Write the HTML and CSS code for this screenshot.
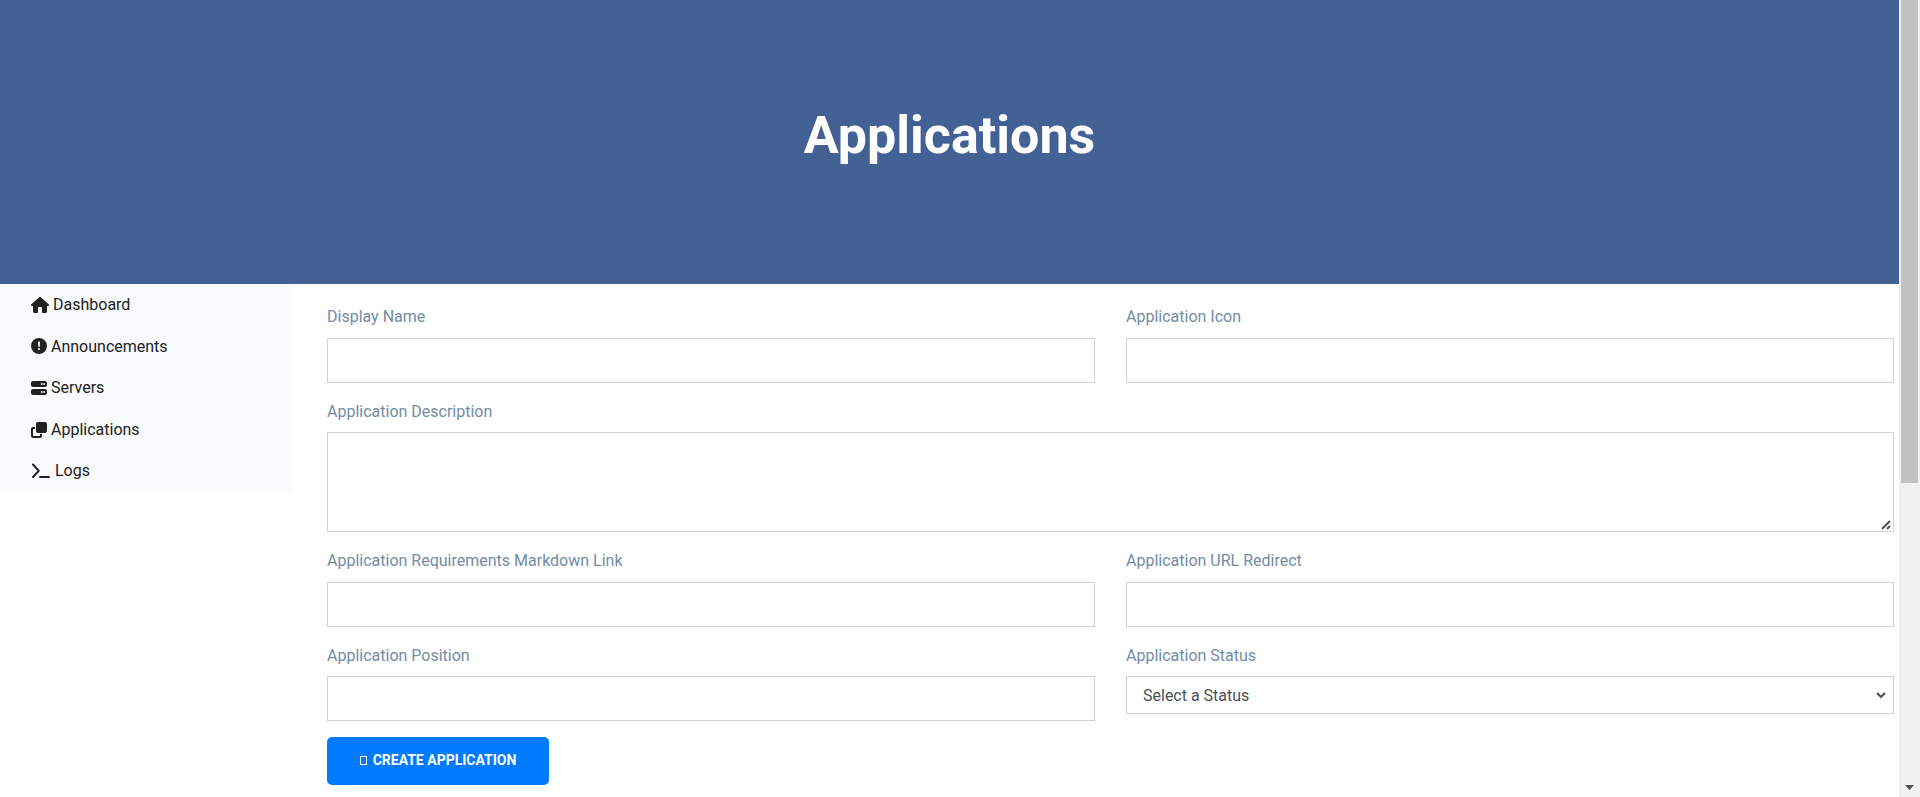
FILE: index.html
```
<!DOCTYPE html>
<html lang="en">
<head>
<meta charset="utf-8">
<title>Applications</title>
<link rel="stylesheet" href="styles.css">
</head>
<body>
<div class="page">
  <header class="banner"><h1 class="banner-title">Applications</h1></header>
  <div class="content">
    <nav class="sidebar">
      <a class="nav-link" href="#"><svg class="icon icon-wide" viewBox="0 0 576 512"><path d="M576 256c0 18-15 32-32 32h-32l1 160v16c0 26-22 48-48 48h-81c-18 0-32-14-32-32V352c0-18-14-32-32-32h-64c-18 0-32 14-32 32v128c0 18-14 32-32 32h-80c-26 0-48-22-48-48V288H32c-18 0-32-14-32-32 0-9 3-17 10-24L266 8c7-7 15-8 22-8s15 2 21 7l255 225c8 7 12 15 12 24z"/></svg>Dashboard</a>
      <a class="nav-link" href="#"><svg class="icon" viewBox="0 0 512 512"><path fill-rule="evenodd" d="M256 512a256 256 0 1 0 0-512 256 256 0 1 0 0 512zm0-400c18 0 32 14 32 28l-6 124c0 13-12 24-26 24s-26-11-26-24l-6-124c0-14 14-28 32-28zm-34 240a34 34 0 1 1 68 0 34 34 0 1 1-68 0z"/></svg>Announcements</a>
      <a class="nav-link" href="#"><svg class="icon" viewBox="0 0 512 512"><path fill-rule="evenodd" d="M64 32C29 32 0 61 0 96v64c0 35 29 64 64 64h384c35 0 64-29 64-64V96c0-35-29-64-64-64H64zm280 66a30 30 0 1 1 0 60 30 30 0 1 1 0-60zm48 30a30 30 0 1 1 60 0 30 30 0 1 1-60 0zM64 288c-35 0-64 29-64 64v64c0 35 29 64 64 64h384c35 0 64-29 64-64v-64c0-35-29-64-64-64H64zm280 66a30 30 0 1 1 0 60 30 30 0 1 1 0-60zm48 30a30 30 0 1 1 60 0 30 30 0 1 1-60 0z"/></svg>Servers</a>
      <a class="nav-link" href="#"><svg class="icon" viewBox="0 0 512 512"><path d="M224 0c-35 0-64 29-64 64v224c0 35 29 64 64 64h224c35 0 64-29 64-64V64c0-35-29-64-64-64H224zM64 160c-35 0-64 29-64 64v224c0 35 29 64 64 64h224c35 0 64-29 64-64v-64h-64v64H64V224h64v-64H64z"/></svg>Applications</a>
      <a class="nav-link" href="#"><svg class="icon icon-prompt" viewBox="0 0 640 512"><path d="M41 71a32 32 0 0 1 46-46l184 200c13 13 13 33 0 46L87 471a32 32 0 0 1-46-46l164-177zM288 416h288a32 32 0 0 1 0 64H288a32 32 0 0 1 0-64z"/></svg>Logs</a>
    </nav>
    <form class="form">
      <div class="field"><label for="name">Display Name</label><input class="control" id="name" type="text"></div>
      <div class="field"><label for="icon">Application Icon</label><input class="control" id="icon" type="text"></div>
      <div class="field field-full">
        <label for="description">Application Description</label>
        <div class="control-wrap">
          <textarea class="control control-area" id="description"></textarea>
          <svg class="grip" viewBox="0 0 10 10"><path d="M1 9l8-8M6 9l3-3"/></svg>
        </div>
      </div>
      <div class="field"><label for="requirements">Application Requirements Markdown Link</label><input class="control" id="requirements" type="text"></div>
      <div class="field"><label for="redirect">Application URL Redirect</label><input class="control" id="redirect" type="text"></div>
      <div class="field"><label for="position">Application Position</label><input class="control" id="position" type="text"></div>
      <div class="field">
        <label for="status">Application Status</label>
        <div class="control-wrap">
          <select class="control control-select" id="status"><option>Select a Status</option></select>
          <svg class="chevron" viewBox="0 0 12 8"><path d="M2 2l4 4 4-4"/></svg>
        </div>
      </div>
      <button class="submit" type="button"><span class="submit-mark"></span>Create Application</button>
    </form>
  </div>
</div>
<div class="scrollbar">
  <div class="scrollbar-thumb"></div>
  <svg class="scrollbar-arrow" viewBox="0 0 18 10"><path d="M0 0h18L9 10z"/></svg>
</div>
</body>
</html>
```
FILE: styles.css
```
* { box-sizing: border-box; }
body {
  margin: 0;
  display: flex;
  height: 100vh;
  overflow: hidden;
  background: #fff;
  color: #212529;
  font: 16px/1.6 Roboto, sans-serif;
}
.page { flex: 1; }
.banner {
  padding: 104px 20px 116px;
  background: #446196;
  text-align: center;
}
.banner-title {
  margin: 0;
  color: #fff;
  font-size: 52px;
  line-height: 64px;
  font-weight: 700;
}
.content { display: flex; align-items: flex-start; }
.sidebar { width: 292px; background: #f8fafc; }
.nav-link {
  display: flex;
  align-items: center;
  gap: 4px;
  padding: 8px 31px;
  color: #212121;
  text-decoration: none;
}
.icon { width: 16px; height: 16px; fill: currentColor; }
.icon-wide { width: 18px; }
.icon-prompt { width: 20px; }
.form {
  flex: 1;
  display: grid;
  grid-template-columns: 1fr 1fr;
  gap: 16px 31px;
  padding: 20px 5px 13px 35px;
}
.field label { display: block; margin-bottom: 8px; color: #728ca5; }
.field-full { grid-column: 1 / -1; }
.control-wrap { position: relative; }
.control {
  display: block;
  width: 100%;
  height: 45px;
  padding: 6px 16px;
  border: 1px solid #ced4da;
  border-radius: 0;
  background: #fff;
  color: #495057;
  font: inherit;
}
.control-area { height: 100px; resize: none; }
.control-select { height: 38px; appearance: none; }
.grip,
.chevron {
  position: absolute;
  fill: none;
  stroke: #495057;
  pointer-events: none;
}
.grip { right: 3px; bottom: 2px; width: 10px; height: 10px; stroke-width: 2; }
.chevron { right: 7px; top: 15px; width: 12px; height: 8px; stroke-width: 2; }
.submit {
  display: flex;
  align-items: center;
  justify-content: center;
  gap: 6px;
  justify-self: start;
  width: 222px;
  height: 48px;
  padding: 0 0 2px;
  border: 0;
  border-radius: 5px;
  background: #007bff;
  color: #fff;
  font: 700 14px/20px Roboto, sans-serif;
  text-transform: uppercase;
}
.submit-mark { width: 7px; height: 9px; border: 1px solid #fff; }
.scrollbar {
  display: flex;
  flex-direction: column;
  justify-content: space-between;
  align-items: center;
  width: 21px;
  padding-bottom: 7px;
  background: #f0f0f0;
}
.scrollbar-thumb { width: 17px; height: 483px; background: #c1c1c1; }
.scrollbar-arrow { width: 9px; height: 5px; fill: #505050; }
```
